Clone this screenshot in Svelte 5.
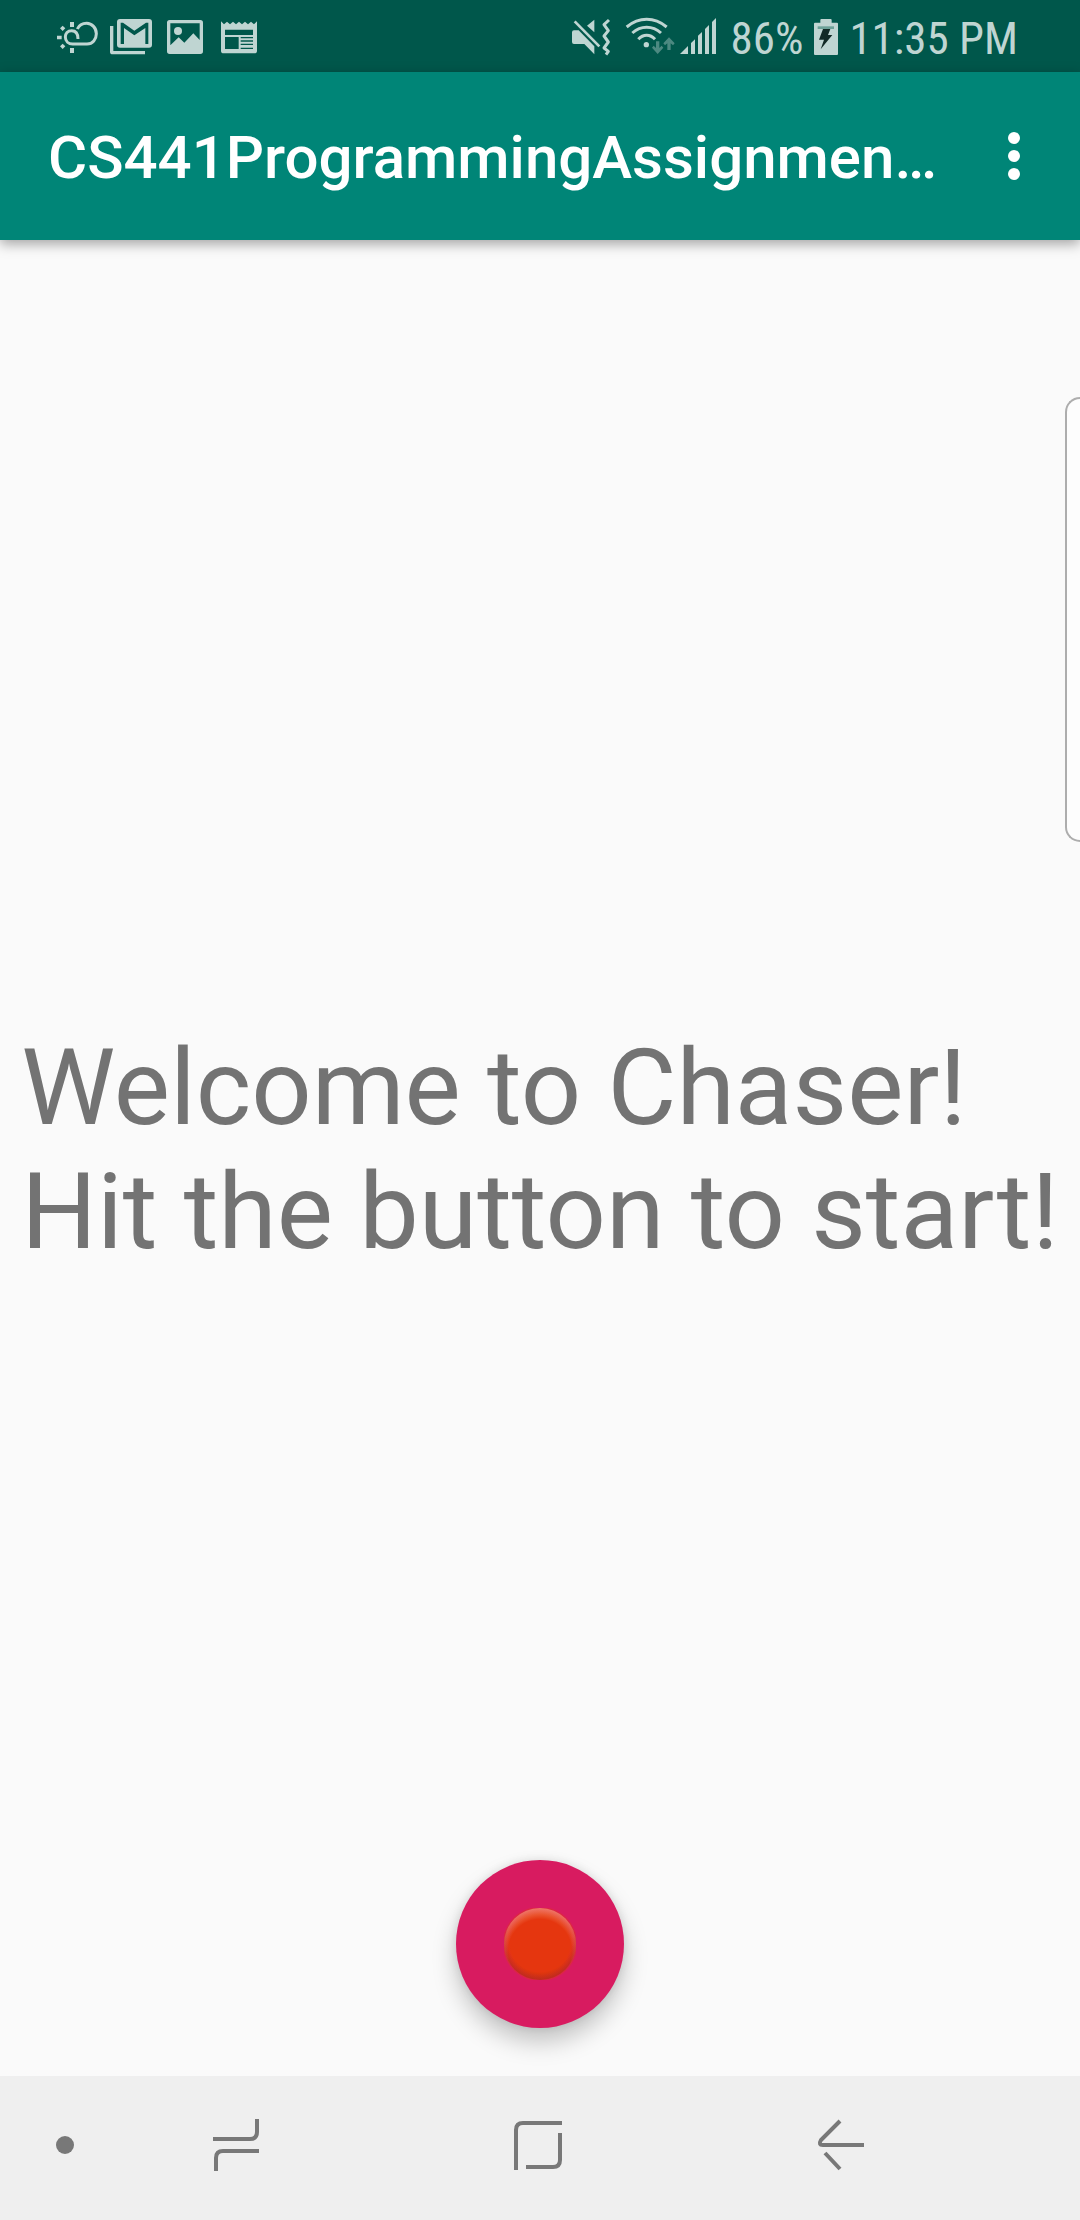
<script>
  const lines = ['Welcome to Chaser!', 'Hit the button to start!'];
</script>

<div class="screen">
  <header class="status">
    <div class="group">
      <svg class="slot" viewBox="33 0 162 216" role="img" aria-label="Weather">
        <path
          d="M114 117C114 100 106 92 95 92C83 92 76 101 76 111C76 124 86 132 98 132H141C158 132 169 118 169 101C169 84 156 70 140 70C126 70 117 76 112 87"
          fill="none"
          stroke="currentColor"
          stroke-width="9"
        />
        <path d="M90 66h12v15H90zM90 144h12v15H90zM51 107h14v11H51z" />
        <path d="M60 85l8-8 8 8-8 8zM60 139l8-8 8 8-8 8z" />
      </svg>
      <svg class="slot" viewBox="195 0 162 216" role="img" aria-label="Gmail">
        <path fill-rule="evenodd" d="M240 57H327a9 9 0 0 1 9 9V134a9 9 0 0 1-9 9H240a9 9 0 0 1-9-9V66a9 9 0 0 1 9-9zM242 68V132H252V84L283 106 316 84V132H325V68H318L283 92 249 68z" />
        <path d="M210 78h10v75h95v10H218a8 8 0 0 1-8-8z" />
      </svg>
      <svg class="slot" viewBox="357 0 162 216" role="img" aria-label="Picture">
        <path fill-rule="evenodd" d="M389 60H481a8 8 0 0 1 8 8V154a8 8 0 0 1-8 8H389a8 8 0 0 1-8-8V68a8 8 0 0 1 8-8zM391 70V136L416 112 433 128 460 100 479 120V70z" />
        <circle cx="414" cy="93" r="12" />
      </svg>
      <svg class="slot" viewBox="519 0 162 216" role="img" aria-label="News">
        <path fill-rule="evenodd" d="M543 64l9 9 9-8 9 8 9-8 9 8 9-8 9 8 9-8 9 8 9-8 9 8 9-9V152a8 8 0 0 1-8 8H551a8 8 0 0 1-8-8zM555 89V105H639V89zM555 111V147H596V111zM602 111V115H639V111zM602 121V125H639V121zM602 131V135H639V131zM602 143V147H639V143z" />
      </svg>
    </div>
    <div class="group">
      <svg class="slot" viewBox="24 0 162 216" role="img" aria-label="Vibrate">
        <path d="M42 91H56L103 139V163L73 132H42a6 6 0 0 1-6-6V97a6 6 0 0 1 6-6zM103 59V97L81 77z" />
        <path d="M44 64L118 139" fill="none" stroke="currentColor" stroke-width="8" />
        <path d="M147 60L132 74 145 92 132 108 145 126 132 144 145 154 138 164" fill="none" stroke="currentColor" stroke-width="9" stroke-linejoin="round" />
      </svg>
      <svg class="slot" viewBox="186 0 162 216" role="img" aria-label="Wi-Fi">
        <g fill="none" stroke="currentColor" stroke-width="9">
          <path d="M200 81Q228 58 260 58T320 81" />
          <path d="M217 99Q236 82 260 82T303 99" />
          <path d="M235 118Q246 106 260 106T285 118" />
        </g>
        <circle cx="259" cy="134" r="8" />
        <path opacity=".4" d="M288 124h10v20l7-7 5 6-17 19-17-19 5-6 7 7zM322 150h10v-20l7 6 5-6-17-18-17 18 5 6 7-6z" />
      </svg>
      <svg class="signal" viewBox="348 0 132 216" role="img" aria-label="Signal">
        <path d="M360 162L384 138V162zM393 129L405 118V162H393zM414 107L426 96V162H414zM435 87L447 75V162H435zM456 66L468 54V162H456z" />
      </svg>
      <span class="battery-level">86%</span>
      <svg class="battery" viewBox="33 0 90 216" role="img" aria-label="Charging">
        <path d="M64 57H92a3 3 0 0 1 3 3V68H111a3 3 0 0 1 3 3V162a3 3 0 0 1-3 3H45a3 3 0 0 1-3-3V71a3 3 0 0 1 3-3H61V60a3 3 0 0 1 3-3z" />
        <path fill="#6ca198" d="M53 79h49v8H53z" />
        <path fill="#122a26" d="M69 87H91L84 105H97L62 148 72 119H57z" />
      </svg>
      <time>11:35 PM</time>
    </div>
  </header>

  <div class="appbar">
    <h1>CS441ProgrammingAssignmen…</h1>
    <button class="menu" aria-label="More options">
      <svg viewBox="0 0 60 60"><circle cx="30" cy="12" r="6" /><circle cx="30" cy="30" r="6" /><circle cx="30" cy="48" r="6" /></svg>
    </button>
  </div>

  <main>
    <p>
      {#each lines as line}
        <span>{line}</span>
      {/each}
    </p>
    <button class="fab" aria-label="Start">
      <svg viewBox="0 0 72 72">
        <defs>
          <radialGradient id="ball" gradientUnits="userSpaceOnUse" cx="36" cy="36" r="38">
            <stop offset=".78" stop-color="#e5360f" />
            <stop offset=".92" stop-color="#e5360f" stop-opacity=".7" />
            <stop offset="1" stop-color="#e5360f" stop-opacity="0" />
          </radialGradient>
          <radialGradient id="shine" gradientUnits="userSpaceOnUse" cx="36" cy="43" r="44">
            <stop offset=".72" stop-color="#ffc8a8" stop-opacity="0" />
            <stop offset=".98" stop-color="#ffc8a8" stop-opacity=".5" />
          </radialGradient>
          <radialGradient id="shade" gradientUnits="userSpaceOnUse" cx="36" cy="31" r="42">
            <stop offset=".78" stop-color="#7a2a00" stop-opacity="0" />
            <stop offset="1" stop-color="#7a2a00" stop-opacity=".4" />
          </radialGradient>
        </defs>
        <circle cx="36" cy="36" r="38" fill="url(#ball)" />
        <circle cx="36" cy="36" r="36" fill="url(#shine)" />
        <circle cx="36" cy="36" r="36" fill="url(#shade)" />
      </svg>
    </button>
  </main>

  <nav>
    <button class="dot" aria-label="Hide navigation bar"><span></span></button>
    <button class="key" aria-label="Recents">
      <svg viewBox="0 0 60 60"><path d="M51 4V17Q51 24 44 24H7M53 36H17Q10 36 10 43V56" /></svg>
    </button>
    <button class="key" aria-label="Home">
      <svg viewBox="0 0 60 60"><path d="M54 8H15Q8 8 8 15V55M52 18V45Q52 52 45 52H18" /></svg>
    </button>
    <button class="key" aria-label="Back">
      <svg viewBox="0 0 60 60"><path d="M31 6L12 25Q9 30 14 30H55M16 38L31 54" /></svg>
    </button>
  </nav>

  <aside aria-label="Edge panel"></aside>
</div>

<style>
  :global(body) {
    margin: 0;
  }
  .screen {
    position: relative;
    display: flex;
    flex-direction: column;
    min-height: 100vh;
    overflow: hidden;
    background: #fafafa;
    font-family: Roboto, sans-serif;
  }
  button {
    display: flex;
    align-items: center;
    justify-content: center;
    margin: 0;
    padding: 0;
    border: 0;
    background: none;
    cursor: pointer;
  }
  .status {
    display: flex;
    justify-content: space-between;
    height: 72px;
    padding: 0 62px 0 51px;
    background: #00574b;
    color: #bfd5d2;
    font-family: 'Roboto Condensed', 'Liberation Sans Narrow', Roboto, sans-serif;
    font-size: 45px;
    line-height: 78px;
    white-space: nowrap;
  }
  .group {
    display: flex;
  }
  .status svg {
    height: 72px;
    fill: currentColor;
  }
  .slot {
    width: 54px;
  }
  .signal {
    width: 44px;
  }
  .battery {
    width: 30px;
  }
  .battery-level {
    margin: 0 8px 0 10px;
  }
  time {
    margin-left: 8px;
  }
  .appbar {
    z-index: 1;
    display: flex;
    align-items: center;
    height: 168px;
    padding: 0 6px 0 48px;
    background: #008577;
    box-shadow: 0 4px 12px rgba(0, 0, 0, 0.35);
    color: #fff;
  }
  h1 {
    flex: 1;
    min-width: 0;
    margin: 0;
    padding-top: 4px;
    overflow: hidden;
    font-size: 60px;
    font-weight: 500;
    line-height: 72px;
    white-space: nowrap;
  }
  .menu {
    width: 120px;
    height: 120px;
  }
  .menu svg {
    width: 60px;
    height: 60px;
    fill: #fff;
  }
  main {
    display: grid;
    flex: 1;
    padding-bottom: 48px;
  }
  p {
    grid-area: 1 / 1;
    place-self: center;
    margin: 0;
    padding-top: 32px;
    color: #737373;
    font-size: 106px;
    line-height: 124px;
  }
  p span {
    display: block;
  }
  .fab {
    grid-area: 1 / 1;
    place-self: end center;
    width: 168px;
    height: 168px;
    border-radius: 50%;
    background: #d81b60;
    box-shadow: 0 14px 24px rgba(0, 0, 0, 0.22), 0 0 10px rgba(0, 0, 0, 0.1);
  }
  .fab svg {
    width: 72px;
    height: 72px;
    overflow: hidden;
  }
  nav {
    display: flex;
    box-sizing: border-box;
    height: 144px;
    padding: 0 90px 6px 45px;
    background: #efefef;
  }
  .dot {
    width: 40px;
  }
  .dot span {
    width: 18px;
    height: 18px;
    border-radius: 50%;
    background: #787878;
  }
  .key {
    flex: 1;
  }
  .key svg {
    width: 60px;
    height: 60px;
    fill: none;
    stroke: #787878;
    stroke-width: 4;
  }
  aside {
    position: absolute;
    top: 397px;
    right: 0;
    box-sizing: border-box;
    width: 15px;
    height: 445px;
    border: 2px solid #adadad;
    border-right: 0;
    border-radius: 15px 0 0 15px;
    background: #fdfdfd;
  }
</style>
